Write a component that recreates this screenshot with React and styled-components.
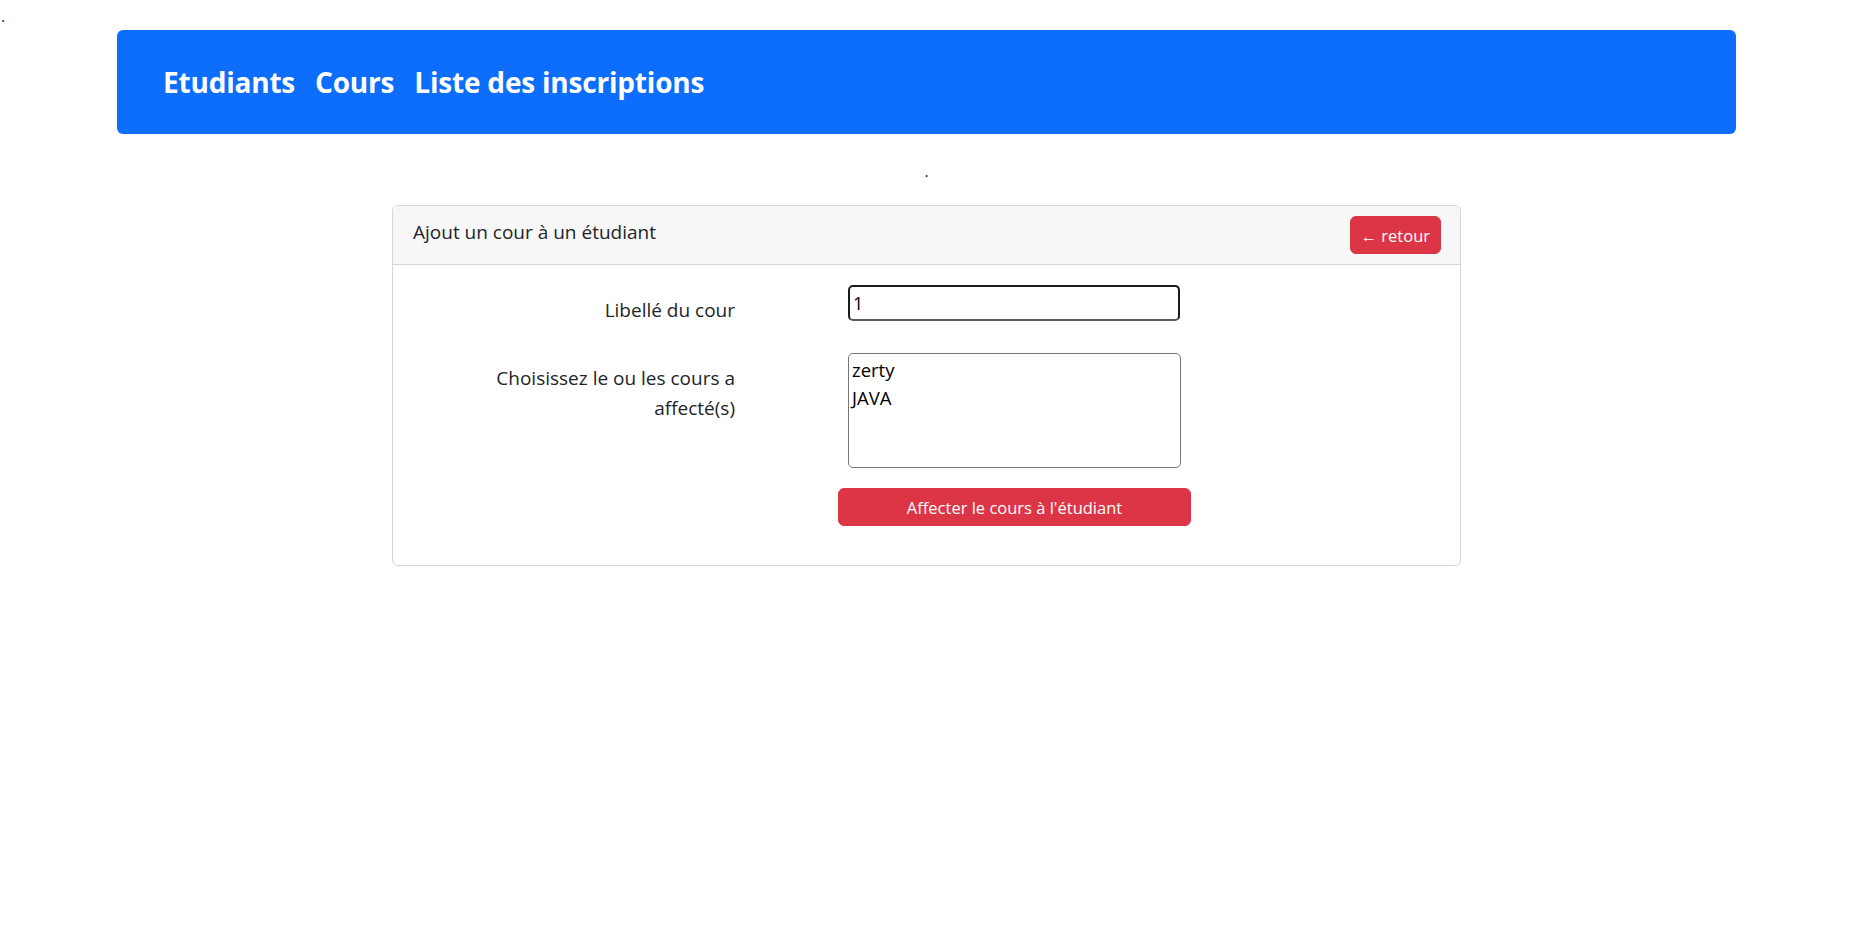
import React from 'react';
import styled, { createGlobalStyle } from 'styled-components';

const GlobalStyle = createGlobalStyle`
  body {
    margin: 0;
    background: #fff;
    color: #212529;
    font-family: "Open Sans", "Noto Sans", sans-serif;
    font-size: 16px;
    line-height: 24px;
  }
`;

const TopDot = styled.div`
  height: 20px;
  padding: 4px 0 0 1px;
  font-size: 16px;
  line-height: 24px;
  overflow: visible;
`;

const NavBar = styled.nav`
  margin: 6px 117px 0;
  height: 104px;
  background: #0d6efd;
  border-radius: 6px;
  display: flex;
  align-items: center;
  gap: 20px;
  padding-left: 46px;
  box-sizing: border-box;
`;

const NavLink = styled.a`
  color: #fff;
  font-weight: 700;
  font-size: 28px;
  letter-spacing: -0.2px;
  text-decoration: none;
  cursor: pointer;
`;

const MidDot = styled.div`
  margin-top: 25px;
  text-align: center;
  font-size: 16px;
  line-height: 24px;
`;

const Card = styled.div`
  width: 1069px;
  margin: 22px auto 0;
  border: 1px solid #d6d6d6;
  border-radius: 6px;
  box-sizing: border-box;
  overflow: hidden;
`;

const CardHeader = styled.div`
  height: 59px;
  box-sizing: border-box;
  background: #f7f7f7;
  border-bottom: 1px solid #d6d6d6;
  display: flex;
  align-items: center;
  justify-content: space-between;
  padding: 0 19px 0 20px;
`;

const Title = styled.span`
  font-size: 19px;
  margin-top: -6px;
`;

const DangerButton = styled.button`
  background: #dc3545;
  color: #fff;
  border: 1px solid #dc3545;
  border-radius: 6px;
  font-family: inherit;
  font-size: 16.5px;
  height: 38px;
  padding: 0 ${(p) => (p.$wide ? '0' : '10px')};
  width: ${(p) => (p.$wide ? '353px' : 'auto')};
  cursor: pointer;
`;

const CardBody = styled.div`
  display: grid;
  grid-template-columns: 342px 1fr;
  column-gap: 103px;
  row-gap: 28px;
  padding: 20px 0 39px;
`;

const Label = styled.label`
  justify-self: end;
  width: 280px;
  text-align: right;
  padding-top: 10px;
  font-size: 19px;
  line-height: 30px;
`;

const Control = styled.div`
  padding-left: 10px;
`;

const TextInput = styled.input`
  display: block;
  width: 332px;
  height: 36px;
  box-sizing: border-box;
  border: 2px solid #1b1b1b;
  border-bottom-color: #5a5a5a;
  border-radius: 5px;
  padding: 0 3px;
  font-family: inherit;
  font-size: 18px;
  color: #000;
  outline: none;
`;

const MultiSelect = styled.select`
  display: block;
  width: 333px;
  height: 115px;
  box-sizing: border-box;
  border: 1px solid #767676;
  border-radius: 5px;
  padding: 1px 2px 0;
  font-family: inherit;
  font-size: 18.5px;
  color: #000;
  outline: none;

  option {
    padding: 1.5px 1px;
  }
`;

const ButtonCell = styled.div`
  grid-column: 2;
  margin-top: -8px;
`;

export default function App() {
  return (
    <>
      <GlobalStyle />
      <TopDot>.</TopDot>
      <NavBar>
        <NavLink>Etudiants</NavLink>
        <NavLink>Cours</NavLink>
        <NavLink>Liste des inscriptions</NavLink>
      </NavBar>
      <MidDot>.</MidDot>
      <Card>
        <CardHeader>
          <Title>Ajout un cour à un étudiant</Title>
          <DangerButton>← retour</DangerButton>
        </CardHeader>
        <CardBody>
          <Label htmlFor="libelle">Libellé du cour</Label>
          <Control>
            <TextInput id="libelle" defaultValue="1" />
          </Control>
          <Label htmlFor="cours">Choisissez le ou les cours a affecté(s)</Label>
          <Control>
            <MultiSelect id="cours" multiple defaultValue={[]}>
              <option value="1">zerty</option>
              <option value="2">JAVA</option>
            </MultiSelect>
          </Control>
          <ButtonCell>
            <DangerButton $wide>Affecter le cours à l'étudiant</DangerButton>
          </ButtonCell>
        </CardBody>
      </Card>
    </>
  );
}
